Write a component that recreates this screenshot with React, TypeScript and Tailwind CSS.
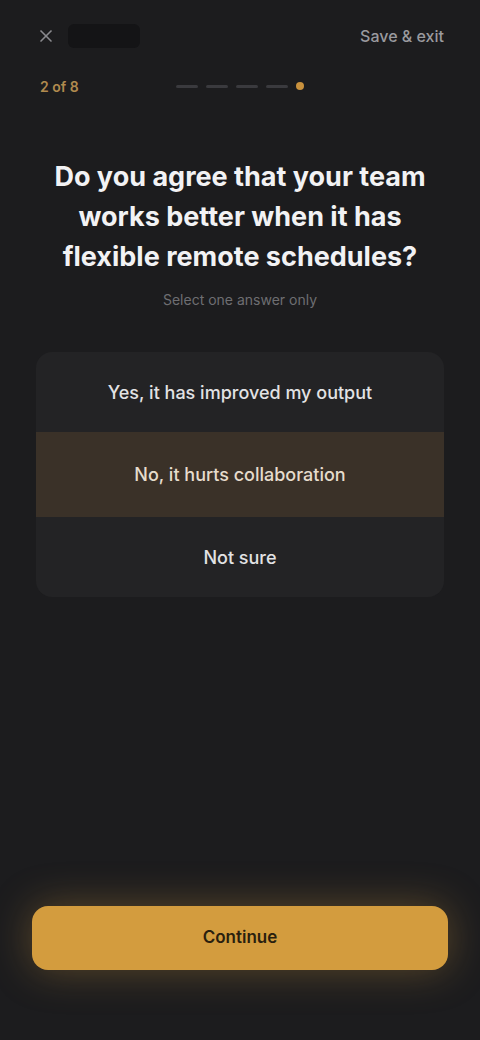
import { X } from "lucide-react";

const options = [
  { label: "Yes, it has improved my output", selected: false },
  { label: "No, it hurts collaboration", selected: true },
  { label: "Not sure", selected: false },
];

export default function App() {
  return (
    <div
      className="min-h-[1040px] w-full bg-[#1c1c1e] flex flex-col text-white"
      style={{ fontFamily: "Inter, 'Noto Sans', sans-serif" }}
    >
      <header className="flex items-center justify-between px-9 pt-4 h-[56px]">
        <div className="flex items-center gap-3">
          <X className="w-5 h-5 text-[#8a8a8e]" />
          <div className="w-[72px] h-6 rounded-md bg-[#141416]" />
        </div>
        <span className="text-[16px] font-medium text-[#9a9a9e]">Save &amp; exit</span>
      </header>

      <div className="flex items-center px-10 mt-4 h-7">
        <span className="text-[14px] font-semibold text-[#b08a4e] w-[60px]">2 of 8</span>
        <div className="flex-1 flex items-center justify-center gap-2 pr-[60px]">
          <span className="w-[22px] h-[3px] rounded-full bg-[#3a3a3e]" />
          <span className="w-[22px] h-[3px] rounded-full bg-[#3a3a3e]" />
          <span className="w-[22px] h-[3px] rounded-full bg-[#3a3a3e]" />
          <span className="w-[22px] h-[3px] rounded-full bg-[#3a3a3e]" />
          <span className="w-2 h-2 rounded-full bg-[#c8913d]" />
        </div>
      </div>

      <h1 className="mt-[57px] px-8 text-center text-[27px] leading-[40px] font-bold text-[#f2f2f4]">
        Do you agree that your team
        <br />
        works better when it has
        <br />
        flexible remote schedules?
      </h1>
      <p className="mt-3 text-center text-[14px] text-[#6e6e72]">Select one answer only</p>

      <div className="mx-9 mt-[42px] rounded-2xl bg-[#232325] overflow-hidden flex flex-col">
        {options.map((o) => (
          <button
            key={o.label}
            className={
              o.selected
                ? "h-[85px] flex items-center justify-center text-[18px] font-medium text-[#e6dccd] bg-[#3a3128]"
                : "h-[80px] flex items-center justify-center text-[18px] font-medium text-[#e2e2e4]"
            }
          >
            {o.label}
          </button>
        ))}
      </div>

      <div className="flex-1" />

      <div className="px-8 pb-[70px]">
        <button className="w-full h-[64px] rounded-2xl bg-[#d39c3e] text-[#2a1f0e] text-[17px] font-semibold shadow-[0_0_40px_rgba(211,156,62,0.35)]">
          Continue
        </button>
      </div>
    </div>
  );
}
